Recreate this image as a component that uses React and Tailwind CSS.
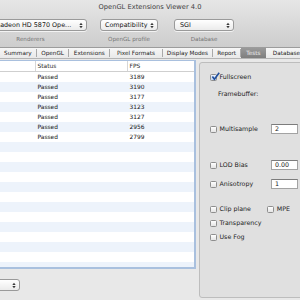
import React from 'react'

const rows = [3189, 3190, 3177, 3123, 3127, 2956, 2799]

function Arrows() {
  return (
    <svg width="4" height="7" viewBox="0 0 4 7" className="shrink-0">
      <path d="M0.3 3 L2 0.8 L3.7 3 Z M0.3 4 L2 6.2 L3.7 4 Z" fill="#3a3a3a" />
    </svg>
  )
}

function Popup({ text, className }) {
  return (
    <div className={`flex h-[12px] items-center justify-between rounded-[3px] border border-[#9a9a9a] bg-linear-to-b from-white to-[#ebebeb] pl-[4px] pr-[3px] shadow-[0_1px_0_rgba(255,255,255,0.7)] ${className}`}>
      <span className="whitespace-nowrap text-[6.4px] leading-none text-[#111]">{text}</span>
      <Arrows />
    </div>
  )
}

function Check({ checked }) {
  return (
    <span className={`relative h-[7px] w-[7px] shrink-0 rounded-[1.5px] border border-[#8e8e8e] bg-linear-to-b ${checked ? 'from-[#e9f0fb] to-[#c2d4ee]' : 'from-white to-[#e4e4e4]'}`}>
      {checked && (
        <svg className="absolute -left-[0.5px] -top-[2.5px]" width="9" height="9" viewBox="0 0 9 9">
          <path d="M1.4 4.6 L3.4 7.3 L8.2 0.8" stroke="#1f4f9e" strokeWidth="1.6" fill="none" strokeLinejoin="round" />
        </svg>
      )}
    </span>
  )
}

function Option({ label, checked, className = 'w-[61px]' }) {
  return (
    <div className={`flex items-center gap-[2.5px] ${className}`}>
      <Check checked={checked} />
      <span className="whitespace-nowrap">{label}</span>
    </div>
  )
}

function Field({ value }) {
  return (
    <div className="flex h-[10px] w-[27px] items-center border border-[#a3a3a3] border-t-[#7c7c7c] bg-white pl-[3px]">
      {value}
    </div>
  )
}

export default function App() {
  const tabs = [
    ['Summary', 'w-[36px]'],
    ['OpenGL', 'w-[32px]'],
    ['Extensions', 'w-[40px]'],
    ['Pixel Formats', 'w-[52px]'],
    ['Display Modes', 'w-[50px]'],
    ['Report', 'w-[27px]'],
  ]
  return (
    <div className="h-[300px] w-[300px] overflow-hidden bg-[#e8e8e8] font-['DejaVu_Sans',sans-serif]">
      {/* toolbar */}
      <div className="h-[47px] bg-linear-to-b from-[#e6e6e6] to-[#cdcdcd]">
        <div className="flex h-[14px] items-center justify-center text-[6.7px] text-[#404040]">
          OpenGL Extensions Viewer 4.0
        </div>
        <div className="mt-[5px] flex">
          <div className="-ml-[26px] flex w-[113px] shrink-0 flex-col items-center">
            <Popup text="AMD Radeon HD 5870 Ope..." className="w-full" />
            <span className="mt-[4.5px] text-[5.6px] leading-[7px] text-[#747474]">Renderers</span>
          </div>
          <div className="ml-[13px] flex w-[58px] shrink-0 flex-col items-center">
            <Popup text="Compatibility" className="w-full" />
            <span className="mt-[4.5px] text-[5.6px] leading-[7px] text-[#747474]">OpenGL profile</span>
          </div>
          <div className="ml-[16px] flex w-[60px] shrink-0 flex-col items-center">
            <Popup text="SGI" className="w-full pl-[5px]" />
            <span className="mt-[4.5px] text-[5.6px] leading-[7px] text-[#747474]">Database</span>
          </div>
        </div>
      </div>

      {/* tab strip */}
      <div className="flex h-[12px] items-center border-y border-t-[#9c9c9c] border-b-[#b4b4b4] bg-linear-to-b from-[#f6f6f6] to-[#e9e9e9] text-[5.7px] text-[#222]">
        {tabs.map(([t, w]) => (
          <React.Fragment key={t}>
            <span className={`text-center whitespace-nowrap ${w}`}>{t}</span>
            <span className="h-[8px] w-px bg-[#a9a9a9]" />
          </React.Fragment>
        ))}
        <span className="flex h-full w-[25px] items-center justify-center bg-linear-to-b from-[#9a9a9a] to-[#7e7e7e] text-[#ececec]">Tests</span>
        <span className="pl-[7px] whitespace-nowrap">Database</span>
      </div>

      {/* content */}
      <div className="flex items-start">
        <div className="flex w-[196px] shrink-0 flex-col">
          <div className="mt-[1px] h-[209px] overflow-hidden border-t border-r-2 border-b-2 border-[#a9c0de] bg-white text-[5.9px] text-[#151515]">
            <div className="flex h-[11px] items-center border-b border-[#cfcfcf] text-[#2a2a2a]">
              <span className="h-full w-[36px] border-r border-[#d6d6d6]" />
              <span className="flex h-full w-[92px] items-center border-r border-[#d6d6d6] pl-[1.5px]">Status</span>
              <span className="pl-[1.5px]">FPS</span>
            </div>
            {Array.from({ length: 20 }).map((_, i) => (
              <div key={i} className={`flex h-[10px] items-center ${i % 2 ? 'bg-[#edf3fb]' : 'bg-white'}`}>
                <span className="w-[36px]" />
                <span className="w-[92px] pl-[1.5px]">{rows[i] ? 'Passed' : ''}</span>
                <span className="pl-[1.5px]">{rows[i] || ''}</span>
              </div>
            ))}
          </div>
          <div className="mt-[10px] flex">
            <div className="-ml-[41px] flex h-[12px] w-[61px] items-center justify-end rounded-[3px] border border-[#9a9a9a] bg-linear-to-b from-white to-[#ebebeb] pr-[3px]">
              <Arrows />
            </div>
          </div>
        </div>

        {/* group box */}
        <div className="mt-[3px] ml-[3px] h-[236px] w-[120px] shrink-0 rounded-[3px] border border-[#bdbdbd] bg-[#e0e0e0] text-[6.3px] text-[#1c1c1c]">
          <div className="mt-[9px] flex h-[10px] items-center pl-[10px]">
            <Option label="Fullscreen" checked />
          </div>
          <div className="mt-[7px] flex h-[10px] items-center pl-[18px]">Framebuffer:</div>
          <div className="mt-[25px] flex h-[10px] items-center pl-[10px]">
            <Option label="Multisample" />
            <Field value="2" />
          </div>
          <div className="mt-[26px] flex h-[10px] items-center pl-[10px]">
            <Option label="LOD Bias" />
            <Field value="0.00" />
          </div>
          <div className="mt-[9px] flex h-[10px] items-center pl-[10px]">
            <Option label="Anisotropy" />
            <Field value="1" />
          </div>
          <div className="mt-[15px] flex h-[10px] items-center pl-[10px]">
            <Option label="Clip plane" className="w-[69px]" />
            <Option label="MPE" />
          </div>
          <div className="mt-[4px] flex h-[10px] items-center pl-[10px]">
            <Option label="Transparency" />
          </div>
          <div className="mt-[4px] flex h-[10px] items-center pl-[10px]">
            <Option label="Use Fog" />
          </div>
        </div>
      </div>
    </div>
  )
}
